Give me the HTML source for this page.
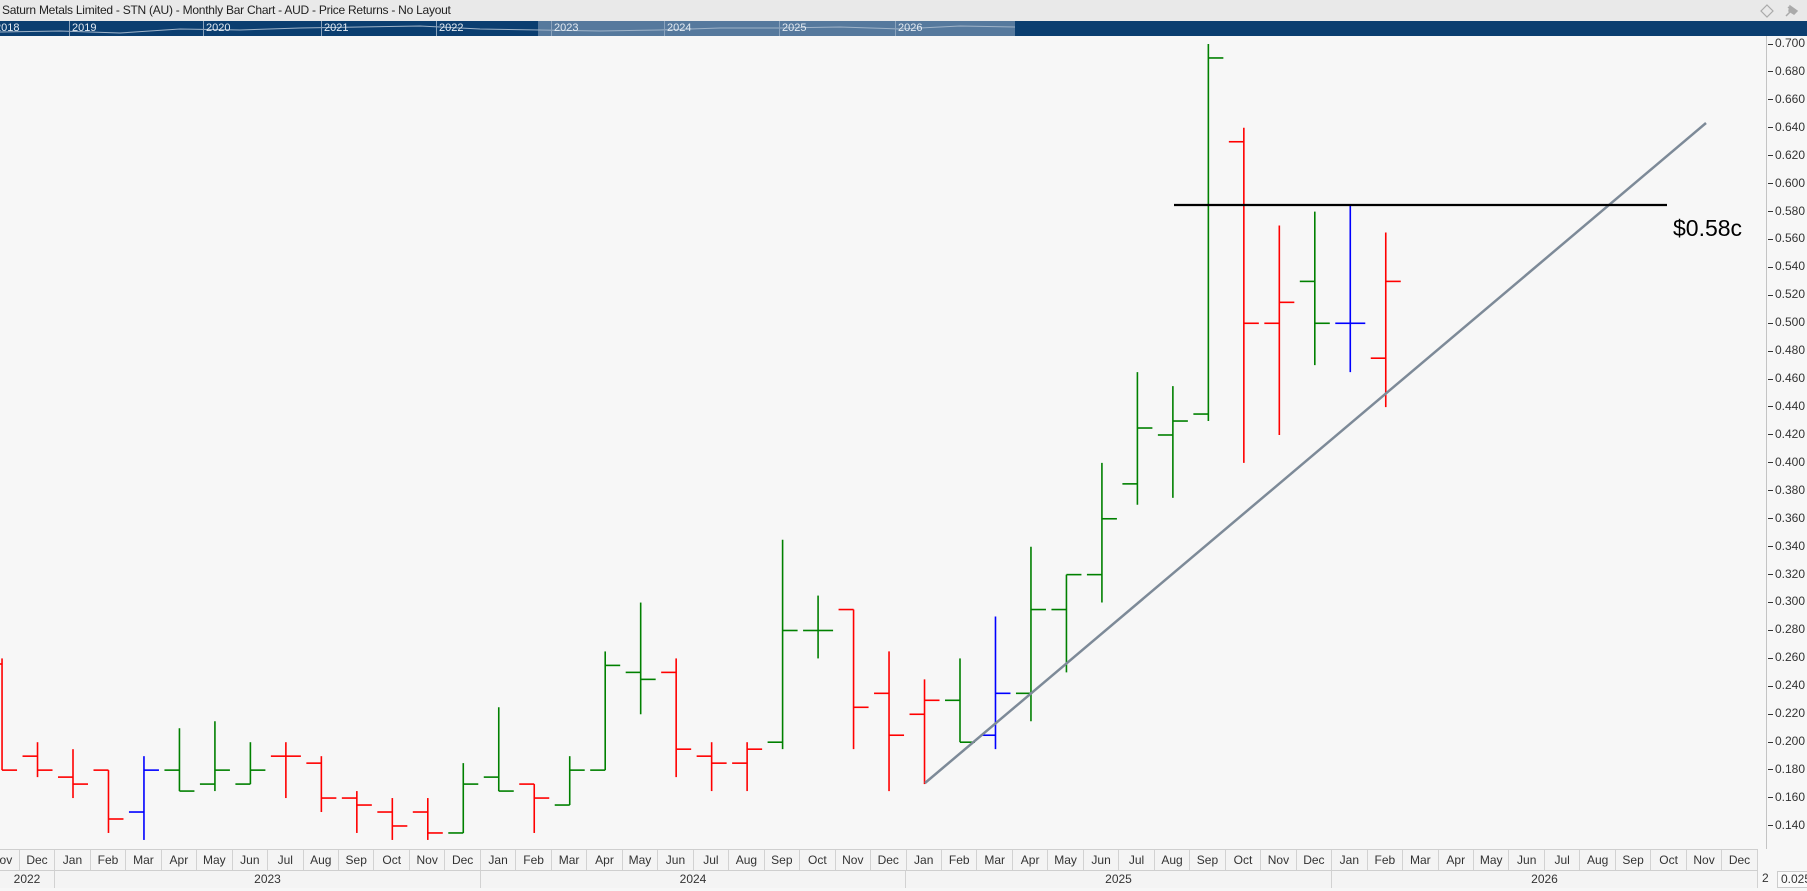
<!DOCTYPE html>
<html><head><meta charset="utf-8">
<style>
*{margin:0;padding:0;box-sizing:border-box}
body{width:1807px;height:891px;overflow:hidden;background:#f7f7f7;font-family:"Liberation Sans",sans-serif;position:relative}
#title{position:absolute;left:0;top:0;width:1807px;height:21px;background:#e9e9e9;font-size:12px;color:#222;line-height:20px;padding-left:2px;letter-spacing:-0.25px}
#nav{position:absolute;left:0;top:21px;width:1807px;height:15px;background:#0b3e70;overflow:hidden}
#sel{position:absolute;left:538px;top:0;width:477px;height:15px;background:#56799d}
.yr{position:absolute;top:0;font-size:11px;color:#e4ebf2;line-height:15px;border-left:1px solid #8aa3bd;padding-left:2px}
#axisline{position:absolute;left:1766px;top:36px;width:1px;height:813px;background:#c4c4c4}
#prices{position:absolute;left:1766px;top:30px;width:41px}
#prices div{height:27.93px;line-height:27.93px;font-size:12px;color:#333;position:relative;padding-left:9px}
#prices div:before{content:"";position:absolute;left:2px;top:13.5px;width:5px;height:1px;background:#333}
#months{position:absolute;left:-15.7px;top:849px;height:21px;display:flex;border-top:1px solid #cfcfcf}
#months div{width:35.48px;flex:none;text-align:center;font-size:12px;color:#333;line-height:20px;border-right:1px solid #d2d2d2;background:#f4f4f4}
#years{position:absolute;left:0;top:870px;height:18px;width:1758px;border-top:1px solid #cfcfcf;border-bottom:1px solid #cfcfcf}
#years div{position:absolute;top:0;height:17px;text-align:center;font-size:12px;color:#333;line-height:17px;border-right:1px solid #d2d2d2;background:#f4f4f4}
</style></head><body>
<div id="title">Saturn Metals Limited - STN (AU) - Monthly Bar Chart - AUD - Price Returns - No Layout</div>
<svg style="position:absolute;left:1760px;top:3px" width="40" height="16"><path d="M7 2 L13 8 L7 14 L1 8 Z" fill="none" stroke="#aaa" stroke-width="1.2"/><path d="M26 13 L30 9 M28 4 L36 10 M30 3 L37 8 L34 11 L29 8 Z" stroke="#aaa" fill="#aaa" stroke-width="1.5"/></svg>
<div id="nav"><div id="sel"></div>
<svg style="position:absolute;left:0;top:0" width="1015" height="15"><polyline points="0,11 60,10 120,12 180,8 240,9 300,7 360,6 420,5 480,8 540,9 600,10 660,9 720,7 780,7 840,6 900,8 960,5 1015,6" fill="none" stroke="#9fb3c8" stroke-width="1"/></svg>
<div class="yr" style="left:-8px">2018</div><div class="yr" style="left:69px">2019</div><div class="yr" style="left:203px">2020</div><div class="yr" style="left:321px">2021</div><div class="yr" style="left:436px">2022</div><div class="yr" style="left:551px">2023</div><div class="yr" style="left:664px">2024</div><div class="yr" style="left:779px">2025</div><div class="yr" style="left:895px">2026</div>
</div>
<svg id="chart" style="position:absolute;left:0;top:36px" width="1766" height="813" viewBox="0 36 1766 813"></svg>
<div style="position:absolute;left:1673px;top:215px;font-size:23px;color:#000">$0.58c</div>
<div id="axisline"></div>
<div id="prices"><div>0.700</div><div>0.680</div><div>0.660</div><div>0.640</div><div>0.620</div><div>0.600</div><div>0.580</div><div>0.560</div><div>0.540</div><div>0.520</div><div>0.500</div><div>0.480</div><div>0.460</div><div>0.440</div><div>0.420</div><div>0.400</div><div>0.380</div><div>0.360</div><div>0.340</div><div>0.320</div><div>0.300</div><div>0.280</div><div>0.260</div><div>0.240</div><div>0.220</div><div>0.200</div><div>0.180</div><div>0.160</div><div>0.140</div></div>
<div id="months"><div>Nov</div><div>Dec</div><div>Jan</div><div>Feb</div><div>Mar</div><div>Apr</div><div>May</div><div>Jun</div><div>Jul</div><div>Aug</div><div>Sep</div><div>Oct</div><div>Nov</div><div>Dec</div><div>Jan</div><div>Feb</div><div>Mar</div><div>Apr</div><div>May</div><div>Jun</div><div>Jul</div><div>Aug</div><div>Sep</div><div>Oct</div><div>Nov</div><div>Dec</div><div>Jan</div><div>Feb</div><div>Mar</div><div>Apr</div><div>May</div><div>Jun</div><div>Jul</div><div>Aug</div><div>Sep</div><div>Oct</div><div>Nov</div><div>Dec</div><div>Jan</div><div>Feb</div><div>Mar</div><div>Apr</div><div>May</div><div>Jun</div><div>Jul</div><div>Aug</div><div>Sep</div><div>Oct</div><div>Nov</div><div>Dec</div></div>
<div id="years"><div style="left:0;width:55px">2022</div><div style="left:55px;width:426px">2023</div><div style="left:481px;width:425px">2024</div><div style="left:906px;width:426px">2025</div><div style="left:1332px;width:426px">2026</div></div>
<div style="position:absolute;left:1762px;top:871px;font-size:12px;color:#333">2</div>
<div style="position:absolute;left:1777px;top:871px;width:32px;height:17px;border:1px solid #ccc;font-size:12px;color:#333;line-height:15px;padding-left:3px;background:#fafafa;overflow:hidden">0.025</div>
<script>
var d=[[-2,.256,.26,.18,.18,'r'],[-1,.19,.20,.175,.18,'r'],[0,.175,.195,.16,.17,'r'],[1,.18,.18,.135,.145,'r'],[2,.15,.19,.13,.18,'b'],[3,.18,.21,.165,.165,'g'],[4,.17,.215,.165,.18,'g'],[5,.17,.20,.17,.18,'g'],[6,.19,.20,.16,.19,'r'],[7,.185,.19,.15,.16,'r'],[8,.16,.165,.135,.155,'r'],[9,.15,.16,.13,.14,'r'],[10,.15,.16,.13,.135,'r'],[11,.135,.185,.135,.17,'g'],[12,.175,.225,.165,.165,'g'],[13,.17,.17,.135,.16,'r'],[14,.155,.19,.155,.18,'g'],[15,.18,.265,.18,.255,'g'],[16,.25,.30,.22,.245,'g'],[17,.25,.26,.175,.195,'r'],[18,.19,.20,.165,.185,'r'],[19,.185,.20,.165,.195,'r'],[20,.20,.345,.195,.28,'g'],[21,.28,.305,.26,.28,'g'],[22,.295,.295,.195,.225,'r'],[23,.235,.265,.165,.205,'r'],[24,.22,.245,.17,.23,'r'],[25,.23,.26,.20,.20,'g'],[26,.205,.29,.195,.235,'b'],[27,.235,.34,.215,.295,'g'],[28,.295,.32,.25,.32,'g'],[29,.32,.40,.30,.36,'g'],[30,.385,.465,.37,.425,'g'],[31,.42,.455,.375,.43,'g'],[32,.435,.70,.43,.69,'g'],[33,.63,.64,.40,.50,'r'],[34,.50,.57,.42,.515,'r'],[35,.53,.58,.47,.50,'g'],[36,.50,.585,.465,.50,'b'],[37,.475,.565,.44,.53,'r']];
var C={r:'#ff0000',g:'#008000',b:'#0000ff'};
function Y(p){return 44+(0.7-p)*1396.4}
var s='';
d.forEach(function(b){var x=73+35.48*b[0];var c=C[b[5]];
s+='<line x1="'+x+'" x2="'+x+'" y1="'+Y(b[2])+'" y2="'+Y(b[3])+'" stroke="'+c+'" stroke-width="1.6"/>';
s+='<line x1="'+(x-15)+'" x2="'+x+'" y1="'+Y(b[1])+'" y2="'+Y(b[1])+'" stroke="'+c+'" stroke-width="1.6"/>';
s+='<line x1="'+x+'" x2="'+(x+15)+'" y1="'+Y(b[4])+'" y2="'+Y(b[4])+'" stroke="'+c+'" stroke-width="1.6"/>';});
s+='<line x1="925" y1="783" x2="1706" y2="123" stroke="#7d8a98" stroke-width="2.5"/>';
s+='<line x1="1174" y1="205" x2="1667" y2="205" stroke="#000" stroke-width="2.2"/>';
document.getElementById('chart').innerHTML=s;
</script>
</body></html>
